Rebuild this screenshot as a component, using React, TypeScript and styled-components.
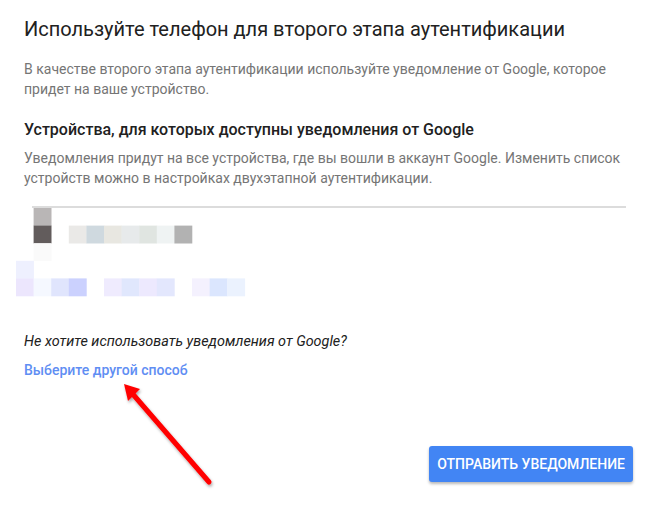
import React from "react";
import styled, { createGlobalStyle } from "styled-components";

const GlobalStyle = createGlobalStyle`
  html, body {
    margin: 0;
    padding: 0;
    background: #fff;
  }
  body {
    font-family: Roboto, "Noto Sans", Arial, sans-serif;
    -webkit-font-smoothing: antialiased;
  }
`;

const Page = styled.div`
  position: relative;
  width: 658px;
  height: 505px;
  box-sizing: border-box;
  padding: 15px 24px 0 24px;
  overflow: hidden;
`;

const Title = styled.h1`
  margin: 0;
  font-size: 20px;
  font-weight: 400;
  line-height: 28px;
  color: #212121;
`;

const Paragraph = styled.p`
  margin: 0;
  font-size: 14px;
  line-height: 20px;
  color: #757575;
`;

const Intro = styled(Paragraph)`
  margin-top: 16px;
`;

const SubTitle = styled.h2`
  margin: 20px 0 0 0;
  font-size: 16px;
  font-weight: 500;
  line-height: 22px;
  color: #212121;
`;

const Note = styled(Paragraph)`
  margin-top: 7px;
`;

const Divider = styled.hr`
  margin: 18px 8px 0 8px;
  border: none;
  border-top: 2px solid #dcdcdc;
  height: 0;
`;

const Mosaic = styled.svg`
  display: block;
  margin: 0 0 0 -8px;
`;

const Question = styled.p`
  margin: 34px 0 0 0;
  font-size: 14.4px;
  line-height: 20px;
  font-style: italic;
  color: #212121;
`;

const Link = styled.a`
  display: inline-block;
  margin-top: 8px;
  font-size: 14px;
  line-height: 20px;
  font-weight: 500;
  color: #5f8ef3;
  text-decoration: none;
  cursor: pointer;
`;

const Footer = styled.div`
  display: flex;
  justify-content: flex-end;
  margin-top: 66px;
  padding-right: 1px;
`;

const SendButton = styled.button`
  height: 36px;
  padding: 0 8px;
  border: none;
  border-radius: 3px;
  background: #4285f4;
  color: #fff;
  font-family: Roboto, Arial, sans-serif;
  font-size: 14px;
  font-weight: 500;
  letter-spacing: 0;
  text-transform: uppercase;
  box-shadow: 0 2px 3px rgba(0, 0, 0, 0.28);
  cursor: pointer;
`;

const Arrow = styled.svg`
  position: absolute;
  left: 0;
  top: 0;
  pointer-events: none;
`;

type Cell = [number, number, string];

// blurred device list, 17.6px pixels
const cells: Cell[] = [
  [1, 0, "#b9b6b6"],
  [1, 1, "#625c5c"],
  [1, 2, "#fafafa"],
  [3, 1, "#eae9e7"],
  [4, 1, "#cfd9df"],
  [5, 1, "#e8e7e1"],
  [6, 1, "#e7eaeb"],
  [7, 1, "#e0e5e1"],
  [8, 1, "#eff3f3"],
  [9, 1, "#b2b2b2"],
  [0, 3, "#eef0fe"],
  [0, 4, "#ece6fd"],
  [1, 4, "#f5f8ff"],
  [2, 4, "#e0e5fd"],
  [3, 4, "#cbd1fe"],
  [5, 4, "#efebfe"],
  [6, 4, "#e0e7fd"],
  [7, 4, "#ede9fe"],
  [8, 4, "#e3e7fd"],
  [10, 4, "#f4f1fe"],
  [11, 4, "#dbe6fe"],
  [12, 4, "#ebf2fe"],
];

const S = 17.6;

export default function App() {
  return (
    <>
      <GlobalStyle />
      <Page>
        <Title>Используйте телефон для второго этапа аутентификации</Title>
        <Intro>
          В качестве второго этапа аутентификации используйте уведомление от
          Google, которое придет на ваше устройство.
        </Intro>
        <SubTitle>Устройства, для которых доступны уведомления от Google</SubTitle>
        <Note>
          Уведомления придут на все устройства, где вы вошли в аккаунт Google.
          Изменить список устройств можно в настройках двухэтапной
          аутентификации.
        </Note>
        <Divider />
        <Mosaic width={240} height={90} viewBox="0 0 240 90">
          {cells.map(([cx, cy, c]) => (
            <rect
              key={`${cx}-${cy}`}
              x={cx * S}
              y={cy * S}
              width={S + 0.3}
              height={S + 0.3}
              fill={c}
            />
          ))}
        </Mosaic>
        <Question>Не хотите использовать уведомления от Google?</Question>
        <Link>Выберите другой способ</Link>
        <Footer>
          <SendButton>Отправить уведомление</SendButton>
        </Footer>
        <Arrow width={658} height={505} viewBox="0 0 658 505">
          <defs>
            <filter id="sh" x="-20%" y="-20%" width="140%" height="140%">
              <feDropShadow dx="1" dy="2" stdDeviation="1.5" floodColor="#000" floodOpacity="0.35" />
            </filter>
          </defs>
          <g filter="url(#sh)">
            <line x1={209} y1={482} x2={131} y2={392} stroke="#ff0000" strokeWidth={5} strokeLinecap="round" />
            <polygon points="124,384 140,389 128,401" fill="#ff0000" />
          </g>
        </Arrow>
      </Page>
    </>
  );
}
